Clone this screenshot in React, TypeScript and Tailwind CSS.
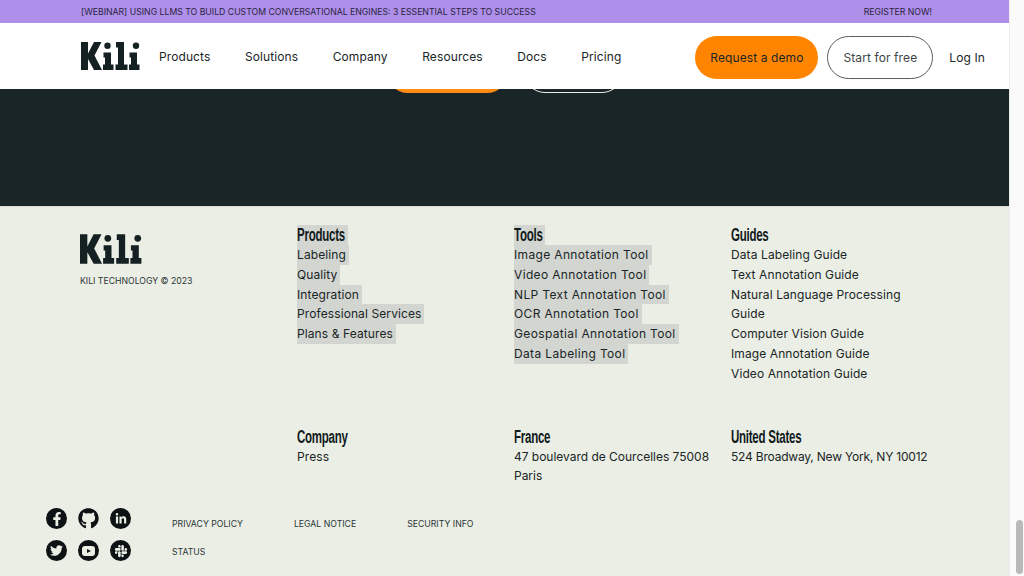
import { FaFacebookF, FaGithub, FaLinkedinIn, FaTwitter, FaSlack } from "react-icons/fa";

const NAV = ["Products", "Solutions", "Company", "Resources", "Docs", "Pricing"];

const FONT = "font-['Inter','Liberation_Sans',sans-serif]";

function Logo({ width = 60, height = 28 }: { width?: number; height?: number }) {
    return (
        <svg width={width} height={height} viewBox="0 0 60 28" fill="#142022">
            <path d="M0 0h7v11.500L13 0h7.500l-7 13.500L21 28h-8L7 17v11H0z" />
            <circle cx="26.500" cy="3.800" r="3.200" />
            <path d="M22.500 10.500H30v12h2.500V28h-10.500v-5.500h2v-7h-1.500z" />
            <path d="M35 0h8v22.500h3.500V28H34.500v-5.500h2.500V5.500h-2z" />
            <circle cx="55" cy="3.800" r="3.200" />
            <path d="M48.500 10.500H56v12h2.500V28H48v-5.500h2v-7h-1.500z" />
        </svg>
    );
}

function Column({ title, width, items, mark, track = "" }: { title: string; width: string; items: string[]; mark?: boolean; track?: string }) {
    return (
        <div className={`flex flex-col items-start ${track}`}>
            <h3 className={`${width} h-[20px] ${mark ? "bg-[#d3d6d0]" : ""}`}>
                <span className="inline-block origin-left scale-x-[0.64] whitespace-nowrap font-['Liberation_Sans',sans-serif] font-bold text-[18px] leading-[20px] tracking-[-0.4px] text-[#111a1c]">
                    {title}
                </span>
            </h3>
            {items.map((item) => (
                <a key={item} className={`block whitespace-nowrap leading-[19.8px] pr-[3px] ${mark ? "bg-[#d3d6d0]" : ""}`}>
                    {item}
                </a>
            ))}
        </div>
    );
}

function Social({ children }: { children: React.ReactNode }) {
    return (
        <span className="w-[21px] h-[21px] rounded-full bg-[#0c1214] text-[#eaeee4] flex items-center justify-center">
            {children}
        </span>
    );
}

export default function App() {
    return (
        <div className={`flex h-[576px] overflow-hidden ${FONT}`}>
            <div className="w-[1009px] flex flex-col">
                <div className="relative z-10 h-[23px] bg-[#ae8fea] flex items-center justify-between pl-[81px] pr-[77px] pt-[3px] text-[8.700px] text-[#2a2440]">
                    <span>[WEBINAR] USING LLMS TO BUILD CUSTOM CONVERSATIONAL ENGINES: 3 ESSENTIAL STEPS TO SUCCESS</span>
                    <span>REGISTER NOW!</span>
                </div>

                <nav className="relative z-10 h-[66px] bg-white flex items-center pl-[81px] pr-[24px] text-[#1a2527] text-[12px] tracking-[0.1px]">
                    <Logo />
                    <div className="flex gap-[34.500px] ml-[18px] mt-[1px]">
                        {NAV.map((item) => (
                            <a key={item}>{item}</a>
                        ))}
                    </div>
                    <div className="ml-auto mt-[3px] flex items-center">
                        <a className="w-[123px] h-[43px] rounded-full bg-[#ff8500] flex items-center justify-center">Request a demo</a>
                        <a className="w-[106px] h-[43px] ml-[9px] rounded-full border border-[#55605f] flex items-center justify-center text-[#3c4648]">Start for free</a>
                        <a className="ml-[16px]">Log In</a>
                    </div>
                </nav>

                <section className="h-[117px] bg-[#192527] flex pl-[387px] gap-[16px] overflow-hidden">
                    <span className="w-[121px] h-[42px] -mt-[38px] rounded-full bg-[#ff8a14]" />
                    <span className="w-[99px] h-[42px] -mt-[38px] rounded-full border border-[#e9ede3]" />
                </section>

                <footer className="flex-1 bg-[#eaeee4] border-t border-[#d9ddd3] pt-[18px] text-[12px] text-[#1a2527] tracking-[0.1px]">
                    <div className="pl-[80px] grid grid-cols-[217px_217px_217px_217px] gap-y-[43px]">
                        <div className="pt-[9px]">
                            <Logo width={63} height={30} />
                            <p className="mt-[11px] text-[8.700px] tracking-normal text-[#2b3537]">KILI TECHNOLOGY © 2023</p>
                        </div>
                        <Column mark title="Products" width="w-[51px]" items={["Labeling", "Quality", "Integration", "Professional Services", "Plans & Features"]} />
                        <Column mark title="Tools" width="w-[31px]" track="tracking-[0.35px]" items={["Image Annotation Tool", "Video Annotation Tool", "NLP Text Annotation Tool", "OCR Annotation Tool", "Geospatial Annotation Tool", "Data Labeling Tool"]} />
                        <Column title="Guides" width="w-[40px]" items={["Data Labeling Guide", "Text Annotation Guide", "Natural Language Processing", "Guide", "Computer Vision Guide", "Image Annotation Guide", "Video Annotation Guide"]} />
                        <div />
                        <Column title="Company" width="w-[54px]" items={["Press"]} />
                        <Column title="France" width="w-[40px]" track="tracking-[-0.02px]" items={["47 boulevard de Courcelles 75008", "Paris"]} />
                        <Column title="United States" width="w-[75px]" track="tracking-[-0.2px]" items={["524 Broadway, New York, NY 10012"]} />
                    </div>

                    <div className="mt-[22px] pl-[46px] flex items-start">
                        <div className="grid grid-cols-[21px_21px_21px] gap-x-[11px] gap-y-[11px]">
                            <Social><FaFacebookF size={14} /></Social>
                            <FaGithub size={21} className="text-[#0c1214]" />
                            <Social><FaLinkedinIn size={12} /></Social>
                            <Social><FaTwitter size={13} /></Social>
                            <Social>
                                <span className="w-[13px] h-[10px] rounded-[3px] bg-[#eaeee4] flex items-center justify-center">
                                    <span className="border-l-[4px] border-y-[2.500px] border-y-transparent border-l-[#0c1214]" />
                                </span>
                            </Social>
                            <Social><FaSlack size={14} /></Social>
                        </div>
                        <div className="ml-[41px] mt-[10px] w-[340px] flex flex-wrap gap-x-[51px] gap-y-[16px] text-[8.700px] leading-[12px] tracking-normal text-[#2b3537]">
                            <a>PRIVACY POLICY</a>
                            <a>LEGAL NOTICE</a>
                            <a>SECURITY INFO</a>
                            <a>STATUS</a>
                        </div>
                    </div>
                </footer>
            </div>

            <div className="w-[15px] bg-[#fafafa] border-l border-[#ececec] flex flex-col justify-end pb-[2px] pl-[6px]">
                <div className="w-[7px] h-[54px] rounded-full bg-[#b9b9b9]" />
            </div>
        </div>
    );
}
